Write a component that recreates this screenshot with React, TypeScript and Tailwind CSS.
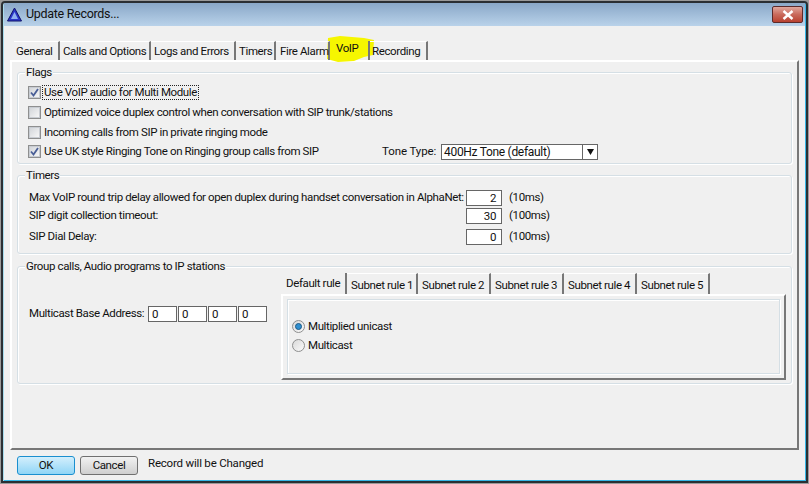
import type { ReactNode } from "react";

const font = "font-['Roboto','Liberation_Sans',sans-serif]";

function Group({ title, className, children }: { title: string; className: string; children: ReactNode }) {
  return (
    <div className={`relative rounded-[3px] border border-[#d5dfe5] shadow-[inset_1px_1px_0_#fff,1px_1px_0_#fff] ${className}`}>
      <span className="absolute left-[7px] top-[-8px] bg-[#f0f0f0] px-[1px] leading-[14px]">{title}</span>
      {children}
    </div>
  );
}

function Check({ label, checked, focus, className }: { label: string; checked?: boolean; focus?: boolean; className?: string }) {
  return (
    <div className={`flex items-center ${className ?? ""}`}>
      <div className="flex h-[13px] w-[13px] shrink-0 items-center justify-center border border-[#8e8f8f] bg-white">
        <div className="flex h-[11px] w-[11px] items-center justify-center border border-[#c8ccd2] bg-gradient-to-br from-[#d3d6da] to-[#f6f6f6]">
          {checked && (
            <svg width="9" height="9" viewBox="0 0 9 9">
              <path d="M1 4.5 L3.5 7.5 L8 1" fill="none" stroke="#4a5f97" strokeWidth="1.8" />
            </svg>
          )}
        </div>
      </div>
      <span className={`ml-[2px] whitespace-nowrap px-[1px] leading-[13px] ${focus ? "outline outline-1 outline-dotted outline-[#222]" : ""}`}>{label}</span>
    </div>
  );
}

function Box({ value, className }: { value: string; className: string }) {
  return <div className={`h-[16px] border border-[#666] bg-white leading-[14px] ${className}`}>{value}</div>;
}

function TimerRow({ label, value, unit, className }: { label: string; value: string; unit: string; className?: string }) {
  return (
    <div className={`flex h-[16px] items-center ${className ?? ""}`}>
      <span className="w-[437px] whitespace-nowrap">{label}</span>
      <Box value={value} className="w-[36px] pr-[5px] text-right" />
      <span className="ml-[7px]">{unit}</span>
    </div>
  );
}

function Radio({ label, on, className }: { label: string; on?: boolean; className?: string }) {
  return (
    <div className={`flex items-center ${className ?? ""}`}>
      <div className="flex h-[13px] w-[13px] items-center justify-center rounded-full border border-[#8e8f8f] bg-gradient-to-br from-[#d9d9d9] to-[#fafafa]">
        {on && <div className="h-[7px] w-[7px] rounded-full border border-[#1d5a86] bg-[#2f8fd0]" />}
      </div>
      <span className="ml-[3px] leading-[13px]">{label}</span>
    </div>
  );
}

const mainTabs = [
  { label: "General", w: "w-[46px]", pl: "pl-[2px]" },
  { label: "Calls and Options", w: "w-[91px]", pl: "pl-[3px]" },
  { label: "Logs and Errors", w: "w-[85px]", pl: "pl-[3px]" },
  { label: "Timers", w: "w-[40px]", pl: "pl-[3px]" },
  { label: "Fire Alarm", w: "w-[54px]", pl: "pl-[4px]" },
  { label: "VoIP", w: "w-[40px]", pl: "pl-[6px]", active: true },
  { label: "Recording", w: "w-[58px]", pl: "pl-[2px]" },
];

const subTabs = [
  { label: "Subnet rule 1", w: "w-[71px]" },
  { label: "Subnet rule 2", w: "w-[73px]" },
  { label: "Subnet rule 3", w: "w-[73px]" },
  { label: "Subnet rule 4", w: "w-[73px]" },
  { label: "Subnet rule 5", w: "w-[73px]" },
];

export default function App() {
  return (
    <div className={`h-[484px] w-[809px] overflow-hidden bg-[#9a9a9a] pl-[1px] pt-[1px] text-[11.5px] tracking-[-0.38px] text-[#111] ${font}`}>
      <div className="flex h-[482px] w-[807px] flex-col rounded-t-[4px] border-2 border-[#2b2f33] bg-[#f0f0f0] shadow-[inset_1px_0_0_#a8dcec,inset_-1px_0_0_#35b6e6,inset_0_-1px_0_#35b6e6]">
        {/* title bar */}
        <div className="mx-[1px] flex h-[23px] shrink-0 items-center bg-gradient-to-b from-[#8aa8c8] to-[#b9d2ea] pl-[3px]">
          <svg width="15" height="15" viewBox="0 0 15 15">
            <path d="M7.5 1 L14.5 14 L0.5 14 Z" fill="#2a35c8" stroke="#10146a" strokeWidth="1" />
            <path d="M7.5 5 L11 12 L4 12 Z" fill="#8fb0f0" />
          </svg>
          <span className="ml-[4px] text-[12.5px] tracking-[-0.3px]">Update Records...</span>
          <div className="ml-auto mr-[2px] flex h-[17px] w-[31px] items-center justify-center rounded-[2px] border border-[#5c2a2a] bg-gradient-to-b from-[#dfa79e] via-[#c96a5c] to-[#b8402f]">
            <svg width="12" height="10" viewBox="0 0 12 10">
              <path d="M1.5 1 L10.5 9 M10.5 1 L1.5 9" stroke="#fff" strokeWidth="2.4" />
            </svg>
          </div>
        </div>

        <div className="flex flex-1 flex-col pl-[7px] pr-[7px] pt-[15px]">
          {/* main tabs */}
          <div className="relative flex h-[19px] pl-[4px]">
            <svg className="absolute left-[316px] top-[-6px]" width="50" height="28" viewBox="0 0 50 28">
              <path d="M2 3 L14 1 L38 3 L48 5 L47 20 L38 22 L28 26 L12 27 L1 24 Z" fill="#f6f600" />
            </svg>
            {mainTabs.map((t) => (
              <div
                key={t.label}
                className={`relative flex items-center whitespace-nowrap border-r-2 border-[#777] ${t.w} ${t.pl} ${t.active ? "pb-[4px]" : "border-t border-t-white pt-[2px]"}`}
              >
                {t.label}
              </div>
            ))}
          </div>

          {/* main pane */}
          <div className="flex h-[390px] flex-col border-2 border-b-[#777] border-l-white border-r-[#777] border-t-white px-[5px] pt-[10px]">
            <Group title="Flags" className="h-[92px] w-[775px] shrink-0 pl-[10px] pt-[9px]">
              <Check className="h-[20px]" label="Use VoIP audio for Multi Module" checked focus />
              <Check className="h-[20px]" label="Optimized voice duplex control when conversation with SIP trunk/stations" />
              <Check className="h-[20px]" label="Incoming calls from SIP in private ringing mode" />
              <div className="flex h-[19px] items-center">
                <Check className="w-[354px]" label="Use UK style Ringing Tone on Ringing group calls from SIP" checked />
                <span className="w-[59px] whitespace-nowrap tracking-[-0.1px]">Tone Type:</span>
                <div className="flex h-[16px] w-[157px] items-center border border-[#666] bg-white pl-[2px]">
                  <span className="flex-1 whitespace-nowrap text-[12px] tracking-[-0.3px]">400Hz Tone (default)</span>
                  <div className="flex h-full w-[15px] items-center justify-center border-l border-[#666]">
                    <svg width="9" height="8" viewBox="0 0 9 8">
                      <path d="M1 1 H8 L4.5 7 Z" fill="#111" />
                    </svg>
                  </div>
                </div>
              </div>
            </Group>

            <Group title="Timers" className="mt-[11px] h-[79px] w-[775px] shrink-0 pl-[11px] pt-[14px]">
              <TimerRow label="Max VoIP round trip delay allowed for open duplex during handset conversation in AlphaNet:" value="2" unit="(10ms)" />
              <TimerRow className="mt-[2px]" label="SIP digit collection timeout:" value="30" unit="(100ms)" />
              <TimerRow className="mt-[5px]" label="SIP Dial Delay:" value="0" unit="(100ms)" />
            </Group>

            <Group title="Group calls, Audio programs to IP stations" className="mt-[12px] flex h-[118px] w-[775px] shrink-0">
              <div className="flex w-[263px] shrink-0 items-center pb-[23px] pl-[11px]">
                <span className="w-[119px] whitespace-nowrap">Multicast Base Address:</span>
                <div className="flex gap-[1px]">
                  <Box value="0" className="w-[29px] pl-[3px]" />
                  <Box value="0" className="w-[29px] pl-[3px]" />
                  <Box value="0" className="w-[29px] pl-[3px]" />
                  <Box value="0" className="w-[29px] pl-[3px]" />
                </div>
              </div>
              <div className="flex w-[505px] flex-col pt-[6px]">
                <div className="flex h-[21px]">
                  <div className="flex w-[66px] items-center whitespace-nowrap border-r-2 border-[#777] pl-[5px]">Default rule</div>
                  {subTabs.map((t) => (
                    <div key={t.label} className={`flex items-center whitespace-nowrap border-r-2 border-t border-[#777] border-t-white pl-[4px] pt-[3px] ${t.w}`}>
                      {t.label}
                    </div>
                  ))}
                </div>
                <div className="h-[86px] border-2 border-b-[#777] border-l-white border-r-[#777] border-t-white px-[4px] pt-[3px]">
                  <div className="h-[75px] border border-[#d5dfe5] pl-[4px] pt-[20px] shadow-[inset_1px_1px_0_#fff,1px_1px_0_#fff]">
                    <Radio on label="Multiplied unicast" />
                    <Radio className="mt-[6px]" label="Multicast" />
                  </div>
                </div>
              </div>
            </Group>
          </div>

          {/* bottom buttons */}
          <div className="flex items-start pl-[7px] pt-[6px]">
            <button className="h-[19px] w-[58px] rounded-[3px] border border-[#1a8fcf] bg-gradient-to-b from-[#d3effc] to-[#8fd5f6] leading-[17px]">OK</button>
            <button className="ml-[5px] h-[19px] w-[58px] rounded-[3px] border border-[#707070] bg-gradient-to-b from-[#f2f2f2] to-[#cfcfcf] leading-[17px]">Cancel</button>
            <span className="ml-[10px] leading-[14px] tracking-[-0.2px]">Record will be Changed</span>
          </div>
        </div>
      </div>
    </div>
  );
}
